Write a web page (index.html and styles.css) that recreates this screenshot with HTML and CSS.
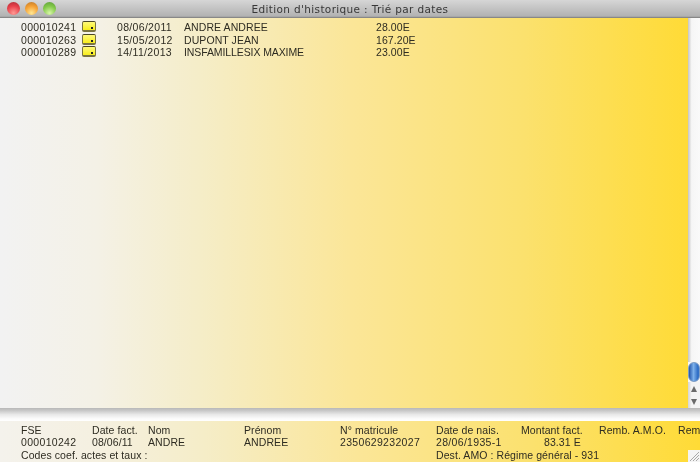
FILE: index.html
```html
<!DOCTYPE html>
<html lang="fr">
<head>
<meta charset="utf-8">
<title>Edition d'historique</title>
<link rel="stylesheet" href="styles.css">
</head>
<body>
<div class="window">
  <header class="titlebar">
    <div class="lights">
      <span class="light red"></span>
      <span class="light orange"></span>
      <span class="light green"></span>
    </div>
    <div class="title">Edition d'historique : Trié par dates</div>
  </header>
  <div class="middle">
    <main class="list">
      <div class="row">
        <span class="num">000010241</span>
        <span class="note"><i></i></span>
        <span class="num">08/06/2011</span>
        <span>ANDRE ANDREE</span>
        <span>28.00E</span>
      </div>
      <div class="row">
        <span class="num">000010263</span>
        <span class="note"><i></i></span>
        <span class="num">15/05/2012</span>
        <span>DUPONT JEAN</span>
        <span>167.20E</span>
      </div>
      <div class="row">
        <span class="num">000010289</span>
        <span class="note"><i></i></span>
        <span class="num">14/11/2013</span>
        <span class="tight">INSFAMILLESIX MAXIME</span>
        <span>23.00E</span>
      </div>
    </main>
    <aside class="scrollbar">
      <div class="track"></div>
      <div class="thumb"></div>
      <div class="arrow up"><b></b></div>
      <div class="arrow down"><b></b></div>
    </aside>
  </div>
  <div class="divider"></div>
  <section class="detail">
    <div class="dline">
      <span>FSE</span><span>Date fact.</span><span>Nom</span><span>Prénom</span><span>N° matricule</span><span>Date de nais.</span><span>Montant fact.</span><span>Remb. A.M.O.</span><span>Rem</span>
    </div>
    <div class="dline">
      <span class="num">000010242</span><span>08/06/11</span><span>ANDRE</span><span>ANDREE</span><span class="num">2350629232027</span><span class="num">28/06/1935-1</span><span class="amount">83.31 E</span>
    </div>
    <div class="dline last">
      <span>Codes coef. actes et taux :</span><span>Dest. AMO : Régime général - 931</span>
    </div>
    <svg class="grip" width="12" height="12" viewBox="0 0 12 12"><path d="M11 2 2 11M11 5 5 11M11 8 8 11" stroke="#a8a8a8" stroke-width="1"/></svg>
  </section>
</div>
</body>
</html>
```
FILE: styles.css
```css
html, body {
  margin: 0;
  padding: 0;
  width: 700px;
  height: 462px;
  overflow: hidden;
  background: #fff;
}
.window {
  width: 700px;
  height: 462px;
  display: grid;
  grid-template-rows: 18px 390px 13px 41px;
  font-family: "Liberation Sans", Arial, sans-serif;
  font-size: 10.5px;
  letter-spacing: 0.08px;
  color: #2e2c22;
  filter: blur(0.35px);
}
.titlebar {
  display: flex;
  align-items: center;
  position: relative;
  background: linear-gradient(#d6d6d6, #b2b2b2 90%, #777);
}
.lights {
  position: absolute;
  left: 7px;
  top: 2px;
  display: flex;
  gap: 5px;
}
.light {
  width: 13px;
  height: 13px;
  border-radius: 50%;
}
.red { background: radial-gradient(circle at 50% 85%, #ff9a94, #e8404a 55%, #a82c34); }
.orange { background: radial-gradient(circle at 50% 85%, #ffe894, #f5a032 55%, #b8762c); }
.green { background: radial-gradient(circle at 50% 85%, #d8f6a8, #82c848 55%, #5c9a3a); }
.title {
  width: 100%;
  text-align: center;
  font-family: "DejaVu Sans", sans-serif;
  font-size: 10.5px;
  letter-spacing: 0.35px;
  color: #383838;
}
.middle {
  display: grid;
  grid-template-columns: 688px 12px;
  min-height: 0;
}
.list {
  padding-top: 3px;
  background: linear-gradient(90deg, #f2f2f2 0, #f4f1e6 14%, #f5edc8 29%, #fbe698 51%, #fbe16e 76%, #ffdb36 100%);
}
.row {
  display: grid;
  grid-template-columns: 61px 35px 67px 192px 60px;
  margin-left: 21px;
  height: 12.5px;
  line-height: 12.5px;
  white-space: nowrap;
}
.num { letter-spacing: 0.32px; }
.tight { letter-spacing: -0.1px; }
.note {
  display: block;
  box-sizing: border-box;
  width: 14px;
  height: 11px;
  border: 1px solid #7a7440;
  border-top-color: #4a4626;
  border-bottom-width: 2px;
  border-radius: 2px;
  background: linear-gradient(#fff97a, #f8ee1c);
  position: relative;
}
.note i {
  position: absolute;
  right: 2px;
  bottom: 1px;
  width: 2px;
  height: 2px;
  background: #222;
}
.scrollbar {
  display: flex;
  flex-direction: column;
  background: #f6f6f6;
}
.track { flex: 1; background: linear-gradient(90deg, #c4c4c4, #f6f6f6 30%, #fafafa); }
.thumb {
  height: 20px;
  width: 12px;
  border-radius: 6px;
  background: linear-gradient(90deg, #2456aa, #7cb0ea 45%, #3472c8 85%);
  border: 1px solid #7c9cc4;
  box-sizing: border-box;
}
.arrow {
  height: 13px;
  display: flex;
  align-items: center;
  justify-content: center;
  background: linear-gradient(90deg, #d4d4d4, #f4f4f4 30%);
}
.arrow b {
  width: 0;
  height: 0;
  border-left: 3.5px solid transparent;
  border-right: 3.5px solid transparent;
}
.up b { border-bottom: 6px solid #6a6a6a; }
.down b { border-top: 6px solid #6a6a6a; }
.divider {
  background: linear-gradient(#b8b8b8 0, #c8c8c8 20%, #e8e8e8 50%, #fafafa 80%, #ffffff 100%);
}
.detail {
  position: relative;
  padding-top: 2.5px;
  background: linear-gradient(90deg, #f4f2ec 0, #f5f0e0 14%, #f5edc8 29%, #fbe698 51%, #fbe16e 76%, #ffdb36 100%);
  overflow: hidden;
}
.dline {
  display: grid;
  grid-template-columns: 71px 56px 96px 96px 96px 85px 78px 79px 22px;
  margin-left: 21px;
  height: 12.5px;
  line-height: 12.5px;
  white-space: nowrap;
}
.amount { padding-left: 23px; }
.last { grid-template-columns: 415px 264px; }
.grip {
  position: absolute;
  right: 0;
  bottom: 0;
  background: #f4f4f4;
}
```
